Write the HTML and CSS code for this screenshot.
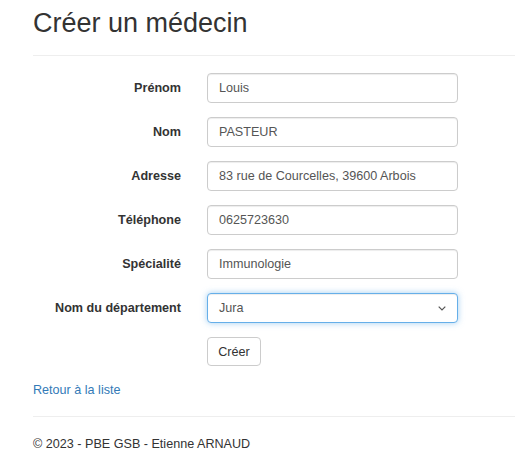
FILE: index.html
```html
<!DOCTYPE html>
<html lang="fr">
<head>
<meta charset="utf-8">
<title>Créer un médecin</title>
<link rel="stylesheet" href="styles.css">
</head>
<body>
<div class="page">
  <h2 class="title">Créer un médecin</h2>
  <hr class="rule">
  <form class="form">
    <div class="row">
      <label class="label">Prénom</label>
      <input class="control" type="text" value="Louis">
    </div>
    <div class="row">
      <label class="label">Nom</label>
      <input class="control" type="text" value="PASTEUR">
    </div>
    <div class="row">
      <label class="label">Adresse</label>
      <input class="control" type="text" value="83 rue de Courcelles, 39600 Arbois">
    </div>
    <div class="row">
      <label class="label">Téléphone</label>
      <input class="control" type="text" value="0625723630">
    </div>
    <div class="row">
      <label class="label">Spécialité</label>
      <input class="control" type="text" value="Immunologie">
    </div>
    <div class="row">
      <label class="label">Nom du département</label>
      <div class="select focus">
        <span>Jura</span>
        <svg class="chev" width="8" height="5" viewBox="0 0 8 5"><path d="M0.7 0.7l3.3 3.3 3.3-3.3" fill="none" stroke="#555" stroke-width="1.2"/></svg>
      </div>
    </div>
    <div class="row">
      <span></span>
      <div><button type="button" class="btn">Créer</button></div>
    </div>
  </form>
  <div class="back"><a href="#">Retour à la liste</a></div>
  <hr class="rule foot-rule">
  <footer class="footer">© 2023 - PBE GSB - Etienne ARNAUD</footer>
</div>
</body>
</html>
```
FILE: styles.css
```css
* { box-sizing: border-box; }
html, body { margin: 0; padding: 0; background: #fff; }
body {
  font-family: "Liberation Sans", Arial, sans-serif;
  font-size: 12.6px;
  color: #333;
  overflow: hidden;
}
.page { padding-left: 33px; }
.title {
  margin: 0;
  padding-top: 8px;
  font-size: 27px;
  font-weight: 400;
  line-height: 30px;
  color: #333;
}
.rule {
  border: 0;
  border-top: 1px solid #eee;
  margin: 17px 0 0 0;
  height: 0;
}
.form { margin-top: 17px; }
.row {
  display: grid;
  grid-template-columns: 148px 251px;
  column-gap: 26px;
  align-items: center;
  margin-bottom: 14px;
}
.label {
  text-align: right;
  font-weight: 700;
  color: #333;
}
.control, .select {
  height: 30px;
  width: 251px;
  border: 1px solid #ccc;
  border-radius: 4px;
  padding: 0 11px;
  font: inherit;
  color: #555;
  background: #fff;
  box-shadow: inset 0 1px 1px rgba(0,0,0,.075);
}
.select {
  display: flex;
  align-items: center;
  justify-content: space-between;
}
.select.focus {
  border-color: #66afe9;
  box-shadow: inset 0 1px 1px rgba(0,0,0,.075), 0 0 6px rgba(102,175,233,.6);
}
.chev { margin-right: 0; }
.btn {
  height: 29px;
  width: 54px;
  border: 1px solid #ccc;
  border-radius: 4px;
  background: #fff;
  font: inherit;
  color: #333;
  padding: 0;
}
.back { margin-top: 9px; line-height: 20px; }
.back a { color: #337ab7; text-decoration: none; }
.foot-rule { margin-top: 16px; }
.footer { margin-top: 19px; line-height: 16px; color: #333; }
```
